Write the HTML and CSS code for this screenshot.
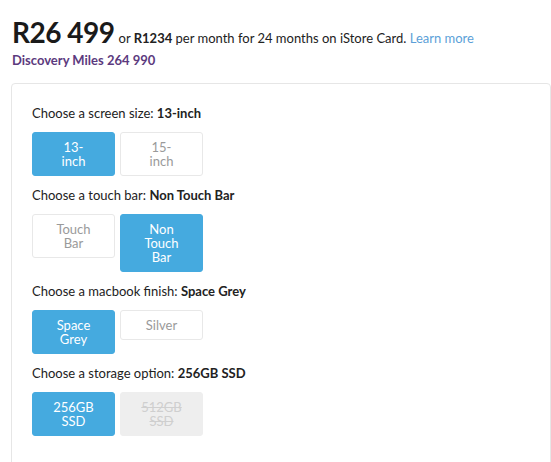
FILE: index.html
```html
<!DOCTYPE html>
<html>
<head>
<meta charset="utf-8">
<link rel="stylesheet" href="styles.css">
</head>
<body>
<div class="page">
  <div class="price-line">
    <span class="price">R26 499</span>
    <span class="finance">or <b>R1234</b> per month for 24 months on iStore Card. <a class="learn" href="#">Learn more</a></span>
  </div>
  <div class="miles">Discovery Miles 264 990</div>
  <div class="card">
    <div class="option">
      <div class="label">Choose a screen size: <b>13-inch</b></div>
      <div class="choices">
        <div class="btn active">13-<br>inch</div>
        <div class="btn">15-<br>inch</div>
      </div>
    </div>
    <div class="option">
      <div class="label">Choose a touch bar: <b>Non Touch Bar</b></div>
      <div class="choices">
        <div class="btn">Touch<br>Bar</div>
        <div class="btn active">Non<br>Touch<br>Bar</div>
      </div>
    </div>
    <div class="option">
      <div class="label">Choose a macbook finish: <b>Space Grey</b></div>
      <div class="choices">
        <div class="btn active">Space<br>Grey</div>
        <div class="btn">Silver</div>
      </div>
    </div>
    <div class="option">
      <div class="label">Choose a storage option: <b>256GB SSD</b></div>
      <div class="choices">
        <div class="btn active">256GB<br>SSD</div>
        <div class="btn disabled">512GB<br>SSD</div>
      </div>
    </div>
  </div>
</div>
</body>
</html>
```
FILE: styles.css
```css
html, body {
  margin: 0;
  padding: 0;
  background: #ffffff;
}
body {
  font-family: Lato, "Open Sans", sans-serif;
  color: #222222;
  font-size: 13px;
}
.page {
  padding: 14px 0 0 11px;
}
.price-line {
  display: flex;
  align-items: baseline;
  gap: 4px;
  padding-left: 1px;
}
.price {
  font-size: 28px;
  font-weight: 700;
  letter-spacing: -0.5px;
  color: #1a1a1a;
  line-height: 36px;
}
.finance {
  font-size: 13px;
  color: #222222;
}
.finance b {
  font-weight: 700;
}
.learn {
  color: #5b9fd8;
  text-decoration: none;
}
.miles {
  font-weight: 700;
  color: #5c3a7e;
  font-size: 13px;
  line-height: 20px;
  padding-left: 1px;
}
.card {
  margin-top: 13px;
  border: 1px solid #e6e6e6;
  border-radius: 4px;
  padding: 19px 20px 40px 20px;
  min-height: 400px;
}
.label {
  line-height: 20px;
  margin-bottom: 9px;
}
.label b {
  font-weight: 700;
}
.choices {
  display: flex;
  gap: 5px;
  align-items: flex-start;
  margin-bottom: 9px;
}
.btn {
  width: 81px;
  padding: 7px 0;
  line-height: 14px;
  font-size: 13px;
  text-align: center;
  border: 1px solid #e8e8e8;
  border-radius: 3px;
  color: #9a9a9a;
  background: #ffffff;
}
.btn.active {
  background: #45aadf;
  border-color: #45aadf;
  color: #ffffff;
}
.btn.disabled {
  background: #eeeeee;
  border-color: #eeeeee;
  color: #cfcfcf;
  text-decoration: line-through;
}
```
